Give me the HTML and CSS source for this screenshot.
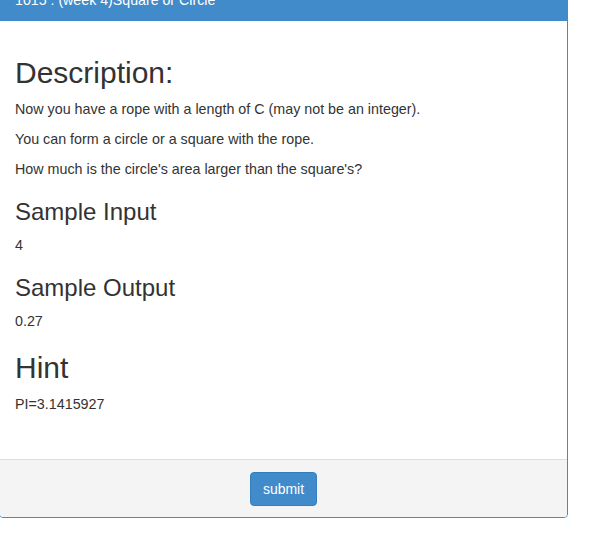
FILE: index.html
```html
<!DOCTYPE html>
<html>
<head>
<meta charset="utf-8">
<link rel="stylesheet" href="styles.css">
</head>
<body>
<div class="panel">
  <div class="panel-heading">
    <h3 class="panel-title">1015 : (week 4)Square or Circle</h3>
  </div>
  <div class="panel-body">
    <h2 class="big">Description:</h2>
    <p>Now you have a rope with a length of C (may not be an integer).</p>
    <p>You can form a circle or a square with the rope.</p>
    <p>How much is the circle's area larger than the square's?</p>
    <h3 class="mid">Sample Input</h3>
    <p>4</p>
    <h3 class="mid">Sample Output</h3>
    <p>0.27</p>
    <h2 class="big">Hint</h2>
    <p>PI=3.1415927</p>
  </div>
  <div class="panel-footer">
    <button class="btn">submit</button>
  </div>
</div>
</body>
</html>
```
FILE: styles.css
```css
html, body {
  margin: 0;
  padding: 0;
  background: #fff;
}
body {
  font-family: "Liberation Sans", Arial, sans-serif;
  font-size: 14px;
  line-height: 20px;
  color: #333;
}
.panel {
  width: 569px;
  box-sizing: border-box;
  margin-top: -19px;
  margin-left: -1px;
  border: 1px solid #428bca;
  border-radius: 4px;
  background: #fff;
}
.panel-heading {
  background: #428bca;
  border-bottom: 1px solid #428bca;
  border-radius: 3px 3px 0 0;
  padding: 10px 15px;
  color: #fff;
}
.panel-title {
  margin: 0;
  font-size: 14.2px;
  font-weight: 500;
  line-height: 17.6px;
}
.panel-body {
  padding: 15px 15px 35px;
}
.big {
  font-size: 30px;
  font-weight: 500;
  line-height: 1.1;
  margin: 20px 0 10px;
}
.mid {
  font-size: 24px;
  font-weight: 500;
  line-height: 1.1;
  margin: 20px 0 10px;
}
p {
  margin: 0 0 10px;
  font-size: 14.3px;
}
.panel-footer {
  background: #f4f4f4;
  border-top: 1px solid #ddd;
  border-radius: 0 0 3px 3px;
  padding: 12px 15px 11px;
  text-align: center;
}
.btn {
  display: inline-block;
  font-family: "Liberation Sans", Arial, sans-serif;
  font-size: 14px;
  line-height: 20px;
  padding: 6px 12px;
  color: #fff;
  background: #428bca;
  border: 1px solid #357ebd;
  border-radius: 4px;
  vertical-align: middle;
}
```
